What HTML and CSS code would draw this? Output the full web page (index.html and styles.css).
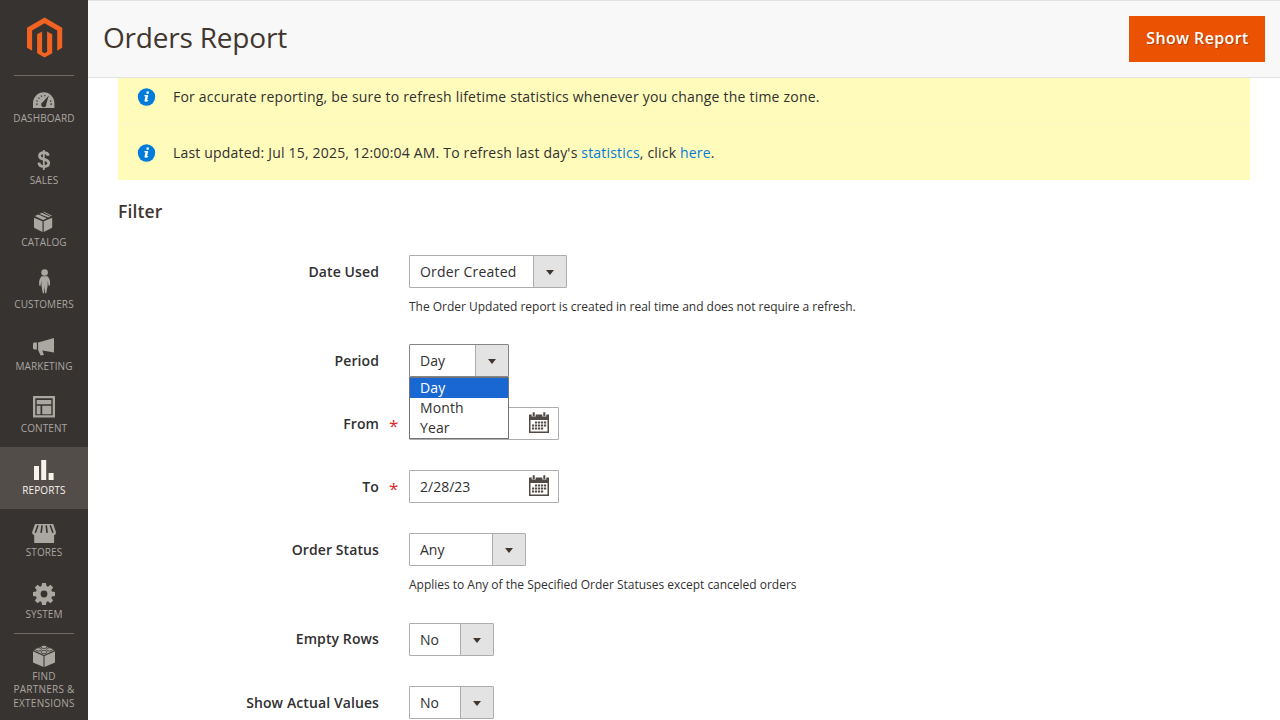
FILE: index.html
```html
<!DOCTYPE html>
<html lang="en">
<head>
<meta charset="utf-8">
<title>Orders Report</title>
<link rel="stylesheet" href="styles.css">
</head>
<body>
<div class="app">
  <aside class="sidebar">
    <a class="logo"><svg width="36" height="41" viewBox="0 0 36 41"><path fill="#f26322" d="M17.6 0.3 35.2 10.5V30.6L30.2 33.5V13.4L17.6 6.1 5.1 13.4V33.5L0 30.6V10.5ZM15.1 14.2V34.6L17.6 36.1 20.1 34.6V14.2L25.2 17.1V36L17.6 40.4 10.1 36V17.1Z" transform="translate(0 .2)"/></svg></a>
    <nav class="menu">
      <a class="item"><svg class="icon" viewBox="0 0 40 36"><path d="M9 33V28a10.7 10.7 0 0 1 21.4 0v5Z"/><path class="cut" d="m24.8 20.4-2.5 8.7a2.6 2.6 0 1 1-3.6-1.8Z"/><path class="dots" d="M12 29.2h1.6M12.4 25.8l1.4.5M14.4 22.6l1 1M17.2 20.6l.5 1.2M20.8 20v1.3M27.3 25.8l-1.3.6M28 29.2h-1.8"/></svg><span>Dashboard</span></a>
      <a class="item"><svg class="icon" viewBox="0 0 40 36"><path class="line" d="M24.3 18.7c-.3-2-2-3-4.5-3-2.6 0-4.3 1.1-4.3 3.2 0 4.8 9.2 2.3 9.2 7.2 0 2.2-1.9 3.5-4.8 3.5-3 0-4.8-1.4-5-3.9"/><path class="thin" d="M19.8 13v20"/></svg><span>Sales</span></a>
      <a class="item"><svg class="icon" viewBox="0 0 40 36"><path d="m10 18.7 8.5 3.6v10.6L10 28.8ZM28.2 18.7v10.1l-8.5 4.1V22.3ZM10.7 17.1l3.6-1.6 8.6 3.7-3.8 1.7ZM15.5 14.9l2.2-1.1 8.9 3.9-2.2.9ZM19 13.1l1-.4 8 4.1-1 .5Z"/></svg><span>Catalog</span></a>
      <a class="item"><svg class="icon" viewBox="0 0 40 36"><circle cx="20.6" cy="11.5" r="3.3"/><path d="M17.5 15.3h6.2c2.5 3 2.7 6.1 2.2 9.5h-1.3l-.8-4.8-.2 5-1.3 7.3h-1.2l-.5-7-.6 7h-1.2L17.5 25l-.2-5-.7 4.8h-1.3c-.5-3.4-.3-6.5 2.2-9.5Z"/></svg><span>Customers</span></a>
      <a class="item"><svg class="icon" viewBox="0 0 40 36"><path d="M30 15v14.5l-11.6-2.1 1.5 4.6-3.3.6-2.5-5.5V19.4ZM9 20.5l1-.9h2.9v7H10l-1-1Z"/></svg><span>Marketing</span></a>
      <a class="item"><svg class="icon" viewBox="0 0 40 36"><path fill-rule="evenodd" d="M9 11h22v21.5H9ZM11.3 13.3v17h17.4v-17ZM12.7 15h14.6v4.2H12.7ZM12.7 20.8h3.8v8.4h-3.8ZM18.2 20.8h9.1v8.4h-9.1Z"/></svg><span>Content</span></a>
      <a class="item active"><svg class="icon" viewBox="0 0 40 36"><path d="M10 19h5v14h-5ZM17.2 13h5v20h-5ZM24.6 26h5v7h-5Z"/></svg><span>Reports</span></a>
      <a class="item"><svg class="icon" viewBox="0 0 40 36"><path d="M11 15h18.2L32 23.2c0 2-1 2.8-1.9 2.8v8H10.2v-8c-1-.2-2.1-1-2.1-2.8Z"/><path class="slit" d="m14 16.3-2.7 7.5M18.1 16.3l-1 7.5M22.2 16.3l.9 7.5M26.2 16.3l2.8 7.5"/></svg><span>Stores</span></a>
      <a class="item"><svg class="icon" viewBox="0 0 40 36"><path fill-rule="evenodd" d="M18.1 12h3.8l.6 3.1 1.4.6 2.6-1.9 2.7 2.7-1.9 2.6.6 1.4 3.1.6v3.8l-3.1.6-.6 1.4 1.9 2.6-2.7 2.7-2.6-1.9-1.4.6-.6 3.1h-3.8l-.6-3.1-1.4-.6-2.6 1.9-2.7-2.7 1.9-2.6-.6-1.4-3.1-.6v-3.8l3.1-.6.6-1.4-1.9-2.6 2.7-2.7 2.6 1.9 1.4-.6ZM20 19.6a3.4 3.4 0 1 0 0 6.8 3.4 3.4 0 0 0 0-6.8Z"/></svg><span>System</span></a>
      <a class="item partners"><svg class="icon" viewBox="0 0 40 36"><path d="m9 18.3 10.5 4.8v11L9 29.4ZM31 18.3v11.1L20.5 34.1v-11ZM9.8 17.2l10.2-4.7 10.2 4.7L20 22Z"/><g class="stud"><ellipse cx="20" cy="13.9" rx="3" ry="1.6"/><ellipse cx="14.4" cy="16.4" rx="3" ry="1.6"/><ellipse cx="25.6" cy="16.4" rx="3" ry="1.6"/><ellipse cx="20" cy="19" rx="3" ry="1.6"/></g></svg><span>Find<br>Partners &amp;<br>Extensions</span></a>
    </nav>
  </aside>
  <main class="page">
    <header class="header"><h1>Orders Report</h1><button class="primary">Show Report</button></header>
    <div class="content">
      <div class="message first"><i class="info"><svg viewBox="0 0 18 18"><circle cx="9.5" cy="9" r="8.7" fill="#007bdb"/><path fill="#fff" d="M9.7 3.6H12l-.4 2.1H9.3ZM7.6 7h3.6l-1 4.9c-.1.5.2.6 1.1.2l-.2 1c-1.8 1.1-3.9 1.1-3.5-.8l.8-4.1H7.3Z"/></svg></i><span>For accurate reporting, be sure to refresh lifetime statistics whenever you change the time zone.</span></div>
      <div class="message second"><i class="info"><svg viewBox="0 0 18 18"><circle cx="9.5" cy="9" r="8.7" fill="#007bdb"/><path fill="#fff" d="M9.7 3.6H12l-.4 2.1H9.3ZM7.6 7h3.6l-1 4.9c-.1.5.2.6 1.1.2l-.2 1c-1.8 1.1-3.9 1.1-3.5-.8l.8-4.1H7.3Z"/></svg></i><span>Last updated: Jul 15, 2025, 12:00:04 AM. To refresh last day's <a>statistics</a>, click <a>here</a>.</span></div>
      <h2>Filter</h2>
      <form class="form">
        <div class="row noted"><label>Date Used</label><div class="control"><div class="select w-date"><span>Order Created</span><b class="arrow"></b></div><p class="note">The Order Updated report is created in real time and does not require a refresh.</p></div></div>
        <div class="row"><label>Period</label><div class="control"><div class="select w-period open"><span>Day</span><b class="arrow"></b>
          <ul class="options"><li class="selected">Day</li><li>Month</li><li>Year</li></ul></div></div></div>
        <div class="row"><label class="required">From</label><div class="control"><div class="date"><span></span><svg class="calendar" viewBox="0 0 22 22"><use href="#cal"/></svg></div></div></div>
        <div class="row"><label class="required">To</label><div class="control"><div class="date"><span>2/28/23</span><svg class="calendar" viewBox="0 0 22 22"><g id="cal"><path fill="#514943" fill-rule="evenodd" d="M1 2.5h20V21H1ZM2.5 8v11.5h17V8Z"/><path d="M5.7.5v4M16.3.5v4" stroke="#fff" stroke-width="4"/><path d="M5.7.3v4M16.3.3v4" stroke="#514943" stroke-width="2"/><path d="M7 10.5h11.5M4 13.5h14.5M4 16.5h11.5" stroke="#514943" stroke-width="2" stroke-dasharray="2.2 .8"/></g></svg></div></div></div>
        <div class="row noted last-note"><label>Order Status</label><div class="control"><div class="select w-status"><span>Any</span><b class="arrow"></b></div><p class="note">Applies to Any of the Specified Order Statuses except canceled orders</p></div></div>
        <div class="row"><label class="raised">Empty Rows</label><div class="control"><div class="select w-bool"><span>No</span><b class="arrow"></b></div></div></div>
        <div class="row"><label>Show Actual Values</label><div class="control"><div class="select w-bool"><span>No</span><b class="arrow"></b></div></div></div>
      </form>
    </div>
  </main>
</div>
</body>
</html>
```
FILE: styles.css
```css
* { box-sizing: border-box; }
body { margin: 0; font: 14px/20px "Open Sans", "Noto Sans", sans-serif; color: #303030; background: #fff; }
.app { display: flex; height: 720px; overflow: hidden; }
.sidebar { width: 88px; flex: none; background: #373330; }
.logo { display: block; height: 75px; padding: 17px 0 0 27px; }
.logo svg { display: block; }
.menu { display: flex; flex-direction: column; position: relative; }
.menu::before { content: ""; position: absolute; top: 0; left: 14px; width: 60px; height: 1px; background: #736963; }
.item { height: 62px; display: flex; flex-direction: column; align-items: center; color: #aaa6a0; font-size: 10px; line-height: 13.4px; letter-spacing: .1px; text-transform: uppercase; text-align: center; }
.item span { padding-top: 1px; }
.icon { width: 40px; height: 36px; flex: none; fill: currentColor; }
.icon .cut { fill: #373330; }
.icon .dots { fill: none; stroke: #373330; stroke-width: 1.2; }
.icon .slit { fill: none; stroke: #373330; stroke-width: 1.6; }
.icon .line { fill: none; stroke: currentColor; stroke-width: 2.8; }
.icon .thin { fill: none; stroke: currentColor; stroke-width: 1.8; }
.icon .stud { stroke: #373330; stroke-width: .8; }
.active { background: #524d49; color: #f7f3eb; }
.partners { height: 87px; position: relative; white-space: nowrap; letter-spacing: .25px; }
.partners::before { content: ""; position: absolute; top: 0; left: 14px; width: 60px; height: 1px; background: #736963; }
.page { flex: 1; min-width: 0; }
.header { height: 78px; display: flex; justify-content: space-between; align-items: center; padding: 0 15px; background: #f8f8f8; border-top: 1px solid #e3e3e3; border-bottom: 1px solid #e3e3e3; }
h1 { margin: 0 0 5px; font-size: 28px; line-height: 36px; font-weight: 400; letter-spacing: -.2px; color: #41362f; }
.primary { width: 136px; height: 46px; padding: 0 0 2px; border: 0; background: #eb5202; color: #fff; font: 600 16px/22px "Open Sans", sans-serif; letter-spacing: .38px; text-indent: 1px; text-shadow: 1px 1px 0 rgba(0,0,0,.25); }
.content { padding: 0 30px; }
.message { height: 55px; display: flex; align-items: center; padding: 0 19px; background: #fffbbb; letter-spacing: .216px; }
.message.first { height: 47px; padding-bottom: 8px; border-bottom: 1px solid #fbf7cd; }
.message.second { letter-spacing: .19px; }
.info { width: 18px; height: 18px; margin-right: 18px; }
.info svg { display: block; overflow: visible; }
.message a { color: #007bdb; }
h2 { margin: 19px 0 31px; font-size: 17.5px; line-height: 25px; font-weight: 600; letter-spacing: .15px; color: #41362f; }
.row { display: flex; height: 63px; }
.row.noted { height: 89px; }
.row.last-note { height: 90px; }
label { position: relative; width: 261px; margin-right: 30px; padding-top: 7px; text-align: right; font-weight: 600; letter-spacing: .1px; }
label.raised { padding-top: 6px; }
.required::after { content: "*"; position: absolute; left: 271px; top: 9px; color: #e22626; font-weight: 400; font-size: 17px; }
.control { flex: 1; }
.select, .date { position: relative; display: flex; height: 33px; border: 1px solid #adadad; border-radius: 1px; background: #fff; }
.select > span, .date > span { flex: 1; padding: 6px 0 0 10px; white-space: nowrap; }
.w-date { width: 158px; letter-spacing: .2px; }
.w-period { width: 100px; }
.w-status { width: 117px; }
.w-bool { width: 85px; }
.arrow { width: 33px; display: flex; align-items: center; justify-content: center; background: #e3e3e3; border-left: 1px solid #adadad; }
.arrow::after { content: ""; border: 4px solid transparent; border-top: 5px solid #41362f; border-bottom: 0; margin-top: 1px; }
.open { border-color: #858585; }
.options { position: absolute; z-index: 2; top: 32px; left: -1px; width: 100px; height: 62px; margin: 0; padding: 0; border: 1px solid #757575; background: #fff; list-style: none; letter-spacing: .1px; }
.options li { height: 20px; padding-left: 10px; line-height: 20px; }
.options .selected { background: #1967d2; color: #fff; }
.date { width: 150px; }
.calendar { width: 22px; height: 22px; margin: 4px 8px 0 0; }
.note { margin: 10px 0 0; font-size: 12px; line-height: 17px; letter-spacing: -.015px; }
```
